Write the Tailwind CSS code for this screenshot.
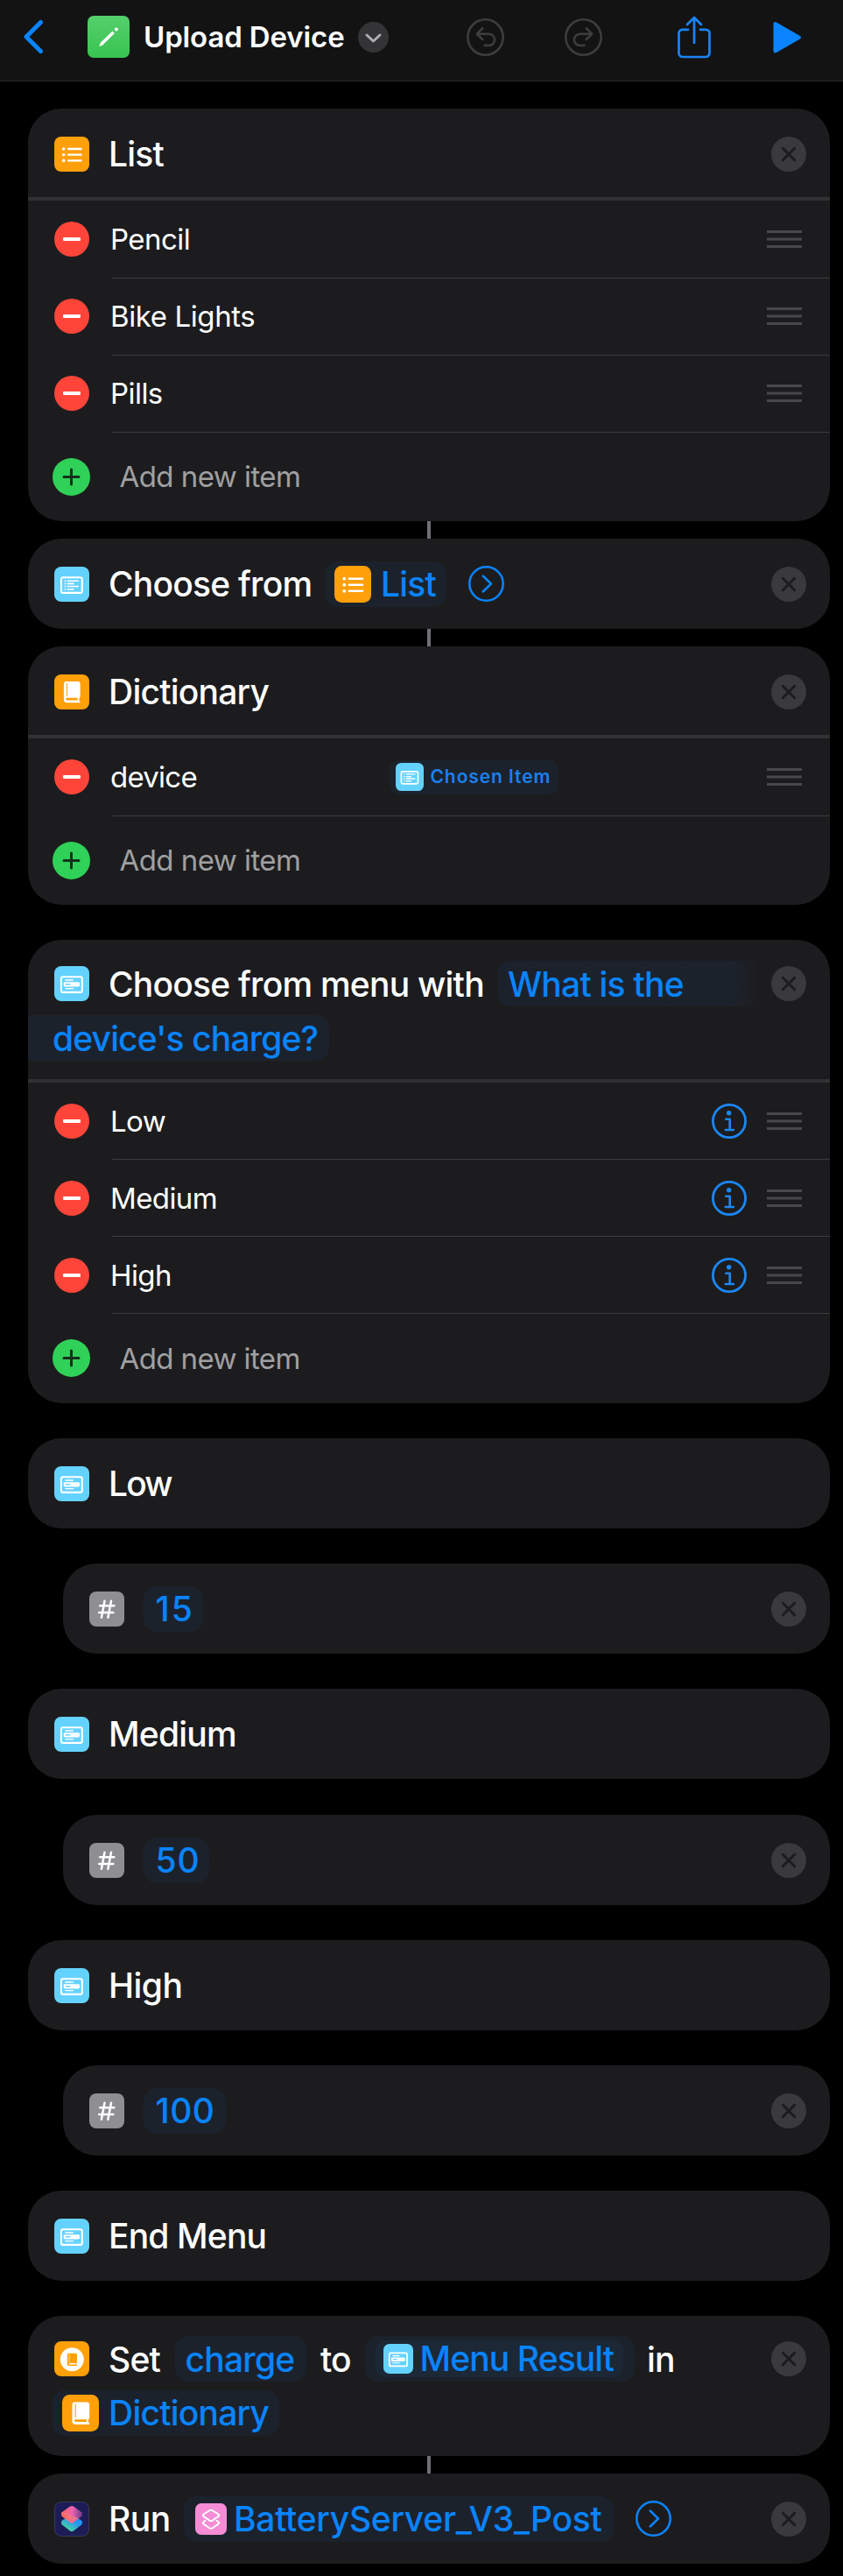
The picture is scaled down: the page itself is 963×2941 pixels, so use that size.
<!DOCTYPE html>
<html lang="en">
<head>
<meta charset="utf-8">
<title>Upload Device</title>
<script src="https://cdn.jsdelivr.net/npm/@tailwindcss/browser@4"></script>
</head>
<body class="bg-black text-white font-['Inter',sans-serif] w-[963px] h-[2941px] overflow-hidden">

<svg class="absolute w-0 h-0">
  <defs>
    <linearGradient id="sc-top" x1="0" y1="0.4" x2="1" y2="0.5"><stop offset="0" stop-color="#ff6a57"/><stop offset=".5" stop-color="#ee62b4"/><stop offset="1" stop-color="#6d3a86"/></linearGradient>
    <linearGradient id="sc-bot" x1="0.9" y1="0.2" x2="0.3" y2="1"><stop offset="0" stop-color="#1a86ff"/><stop offset=".45" stop-color="#2f9fe6"/><stop offset="1" stop-color="#4ade8e"/></linearGradient>
    <linearGradient id="sc-mid" x1="0" y1="0" x2="1" y2="0"><stop offset="0" stop-color="#ff6a57"/><stop offset="1" stop-color="#ef7f95"/></linearGradient>
  </defs>
  <symbol id="list" viewBox="0 0 40 40"><rect width="40" height="40" rx="8" fill="#ff9f0a"/><g fill="#fff"><circle cx="10.7" cy="14" r="1.8"/><circle cx="10.7" cy="20.7" r="1.8"/><circle cx="10.7" cy="27.4" r="1.8"/></g><path d="M16 14h14.6M16 20.7h14.6M16 27.4h14.6" stroke="#fff" stroke-width="2.3" stroke-linecap="round"/></symbol>
  <symbol id="choose" viewBox="0 0 40 40"><rect width="40" height="40" rx="8" fill="#64d2ff"/><rect x="8" y="12.3" width="23.8" height="17.6" rx="2" fill="none" stroke="#fff" stroke-width="2.1"/><path d="M11.6 16.2h1.7M14.7 16.2h13.3M11.6 19.4h1.7M14.7 19.4h7.8M11.6 22.5h1.7M14.7 22.5h13.3M11.6 25.7h1.7M14.7 25.7h7.8" stroke="#fff" stroke-width="1.6"/></symbol>
  <symbol id="menu" viewBox="0 0 40 40"><rect width="40" height="40" rx="8" fill="#64d2ff"/><rect x="8" y="12.3" width="23.8" height="17.6" rx="2" fill="none" stroke="#fff" stroke-width="2.1"/><rect x="10.7" y="18.2" width="18.3" height="5.2" rx="1.4" fill="#fff"/><path d="M12.8 20.8h5.6" stroke="#64d2ff" stroke-width="1.4"/><path d="M12.8 16h8.6M12.8 25.6h8.8" stroke="#fff" stroke-width="1.4" stroke-linecap="round"/></symbol>
  <symbol id="book" viewBox="0 0 40 40"><rect width="40" height="40" rx="8" fill="#ff9f0a"/><path d="M14 8h12.700a3 3 0 0 1 3 3v13.500a3 3 0 0 1-1.200 2.400v3.300l1.300 1v1.100H14.500a3.600 3.600 0 0 1-3.600-3.600V11A3 3 0 0 1 14 8z" fill="#fff"/><path d="M14.500 10v15" stroke="#ff9f0a" stroke-width="1"/><path d="M14.600 26.800h12v2.700h-12a1.350 1.350 0 0 1 0-2.700z" fill="#ff9f0a"/></symbol>
  <symbol id="setbook" viewBox="0 0 40 40"><rect width="40" height="40" rx="8" fill="#ff9f0a"/><circle cx="20.300" cy="20.700" r="13.500" fill="#fff"/><path d="M16.500 13.700h7.700a1.800 1.800 0 0 1 1.800 1.800v8a1.800 1.800 0 0 1-.7 1.400v2l.8.6v.6H16.900a2.100 2.100 0 0 1-2.100-2.100V15.500a1.800 1.800 0 0 1 1.700-1.800z" fill="#ff9f0a"/><path d="M17 15v9" stroke="#fff" stroke-width=".6"/><path d="M17 25h7.300v1.500H17z" fill="#fff"/></symbol>
  <symbol id="shortcuts" viewBox="0 0 40 40"><rect x=".5" y=".5" width="39" height="39" rx="7.500" fill="#1c1d57" stroke="#3a3a52"/><path d="M20 14.500l11.300 7.300q1.800 2.200 0 4.400L22 33.500q-2 1.500-4 0L8.700 26.200q-1.800-2.200 0-4.400z" fill="url(#sc-bot)"/><path d="M18 5.600q2-1.300 4 0l9.300 6.700q1.800 2.200 0 4.400L20 25 8.700 16.700q-1.800-2.200 0-4.400z" fill="url(#sc-top)"/><path d="M8.700 16.700q-1.800-2.200 0-4.400L20 15.500l8 3.800L20 25z" fill="url(#sc-mid)" opacity=".75"/></symbol>
  <symbol id="layers" viewBox="0 0 36 36"><rect width="36" height="36" rx="7" fill="#f58cd5"/><g fill="none" stroke="#fff" stroke-width="1.900" stroke-linejoin="round" stroke-linecap="round"><path d="M16.300 8.300q1.700-1.100 3.400 0l6.800 4.200q1.500 1.200 0 2.400l-6.800 4.700q-1.700 1.100-3.400 0L9.500 14.900q-1.500-1.200 0-2.400z"/><path d="M11.500 19.900l-2 1.300q-1.500 1.200 0 2.400l6.800 4.700q1.700 1.100 3.400 0l6.800-4.700q1.500-1.200 0-2.400l-2-1.300"/></g></symbol>
  <symbol id="hash" viewBox="0 0 40 40"><rect width="40" height="40" rx="8" fill="#8e8e93"/><path d="M17.500 10.800l-3.600 19M25 10.800l-3.600 19M12.200 16.300h16.200M11.200 23.900h16.200" stroke="#fff" stroke-width="2.500" stroke-linecap="round"/></symbol>
  <symbol id="x" viewBox="0 0 40 40"><circle cx="20" cy="20" r="20" fill="#3a3a3e"/><path d="M13.300 13.300l13.400 13.400M26.700 13.300L13.300 26.700" stroke="#1c1c1e" stroke-width="3" stroke-linecap="round"/></symbol>
  <symbol id="minus" viewBox="0 0 40 40"><circle cx="20" cy="20" r="20" fill="#ff453a"/><rect x="10" y="18" width="20" height="4" rx="1.200" fill="#fff"/></symbol>
  <symbol id="plus" viewBox="0 0 43 43"><circle cx="21.500" cy="21.500" r="21.500" fill="#30d158"/><path d="M13 21.500h17M21.500 13v17" stroke="#15301c" stroke-width="3" stroke-linecap="round"/></symbol>
  <symbol id="grip" viewBox="0 0 40 20"><path d="M0 1.500h40M0 10h40M0 18.500h40" stroke="#48484a" stroke-width="3"/></symbol>
  <symbol id="info" viewBox="0 0 40 40"><g fill="none" stroke="#1b87f5"><circle cx="20" cy="20" r="18.600" stroke-width="2.800"/><path d="M16.300 17.700h4.400v12M15.800 30h9" stroke-width="2.600" stroke-linecap="round" stroke-linejoin="round"/></g><circle cx="19.700" cy="10.800" r="2.700" fill="#1b87f5"/></symbol>
  <symbol id="go" viewBox="0 0 41 41"><g fill="none" stroke="#0a84ff" stroke-width="2.500"><circle cx="20.500" cy="20.500" r="19.200"/><path d="M16.700 11.500l9.300 9-9.300 9" stroke-linecap="round" stroke-linejoin="round"/></g></symbol>
</svg>

<!-- Navigation bar -->
<header class="flex items-center h-[93px] pb-[8px] bg-[#131313] border-b border-[#2b2b2b]">
  <svg class="ml-[26px] w-6 h-10 shrink-0" viewBox="0 0 24 40" fill="none" stroke="#0a84ff" stroke-width="5" stroke-linecap="round" stroke-linejoin="round"><path d="M20.500 3.500L4 20l16.500 16.500"/></svg>
  <div class="ml-[50px] w-12 h-12 shrink-0 rounded-[7px] bg-gradient-to-b from-[#55cf6b] to-[#37c450]">
    <svg class="w-12 h-12" viewBox="0 0 48 48"><path d="M13.300 35l1.500-4.200L28.400 17.400l2.500 2.500L17.300 33.400z" fill="#fff"/><circle cx="32.900" cy="15.500" r="2" fill="#fff"/></svg>
  </div>
  <span class="ml-4 w-[245px] shrink-0 whitespace-nowrap text-[33px] leading-10 font-semibold tracking-[-0.13px]">Upload Device</span>
  <svg class="w-[35px] h-[35px] shrink-0" viewBox="0 0 35 35"><circle cx="17.500" cy="17.500" r="17.500" fill="#343436"/><path d="M10 15l7.500 7 7.500-7" fill="none" stroke="#aeaeb2" stroke-width="3" stroke-linecap="round" stroke-linejoin="round"/></svg>
  <svg class="ml-[89px] w-[43px] h-[43px] shrink-0" viewBox="0 0 43 43" fill="none" stroke="#3d3d3f" stroke-width="2.600" stroke-linecap="round" stroke-linejoin="round"><circle cx="21.500" cy="21.500" r="20.200"/><path d="M18.300 11.300l-6.500 6.400 6.500 6.400M12 17.700h13.500a6.600 6.600 0 0 1 0 13.200h-5"/></svg>
  <svg class="ml-[69px] w-[43px] h-[43px] shrink-0" viewBox="0 0 43 43" fill="none" stroke="#3d3d3f" stroke-width="2.600" stroke-linecap="round" stroke-linejoin="round"><circle cx="21.500" cy="21.500" r="20.200"/><path d="M24.700 11.300l6.500 6.400-6.500 6.400M31 17.700H17.500a6.600 6.600 0 0 0 0 13.200h5"/></svg>
  <svg class="ml-[86px] w-[38px] h-[49px] shrink-0" viewBox="0 0 38 49" fill="none" stroke="#1a84f5" stroke-width="2.700" stroke-linecap="round" stroke-linejoin="round"><path d="M12 15.800H5.500a4 4 0 0 0-4 4v22.700a4.500 4.500 0 0 0 4.500 4.500h26a4.500 4.500 0 0 0 4.500-4.500V19.800a4 4 0 0 0-4-4H26M19 2v29M11 10l8-8 8 8"/></svg>
  <svg class="ml-[71px] w-[33px] h-[37px] shrink-0" viewBox="0 0 33 37"><path d="M2.500 3v31.500L30 18.700z" fill="#0a84ff" stroke="#0a84ff" stroke-width="4" stroke-linejoin="round"/></svg>
</header>

<main class="flex flex-col pt-[31px] pl-[32px] pr-[15px] text-[39px] font-medium tracking-[-0.77px] leading-[52px] whitespace-nowrap">

  <!-- List -->
  <section class="rounded-[38px] bg-[#1c1c1e] overflow-hidden">
    <div class="flex items-center h-[105px] pt-[2px] pl-[30px] pr-[27px] border-b-4 border-[#313133]">
      <svg class="w-10 h-10"><use href="#list"/></svg><span class="ml-[22px]">List</span><svg class="ml-auto w-10 h-10"><use href="#x"/></svg>
    </div>
    <div class="text-[33px] font-normal tracking-[-0.55px]">
      <div class="flex items-center h-[88px] pl-[30px]"><svg class="w-10 h-10"><use href="#minus"/></svg><span class="ml-[24px]">Pencil</span><svg class="ml-auto mr-8 w-10 h-5"><use href="#grip"/></svg></div>
      <div class="h-px ml-24 -mb-px bg-[#3c3c3f]"></div>
      <div class="flex items-center h-[88px] pl-[30px]"><svg class="w-10 h-10"><use href="#minus"/></svg><span class="ml-[24px] tracking-[-0.4px]">Bike Lights</span><svg class="ml-auto mr-8 w-10 h-5"><use href="#grip"/></svg></div>
      <div class="h-px ml-24 -mb-px bg-[#3c3c3f]"></div>
      <div class="flex items-center h-[88px] pl-[30px]"><svg class="w-10 h-10"><use href="#minus"/></svg><span class="ml-[24px]">Pills</span><svg class="ml-auto mr-8 w-10 h-5"><use href="#grip"/></svg></div>
      <div class="h-px ml-24 -mb-px bg-[#3c3c3f]"></div>
      <div class="flex items-center h-[102px] pl-[28px]"><svg class="w-[43px] h-[43px]"><use href="#plus"/></svg><span class="ml-[33.5px] text-[#a0a0a2]">Add new item</span></div>
    </div>
  </section>

  <div class="ml-[456px] w-1 h-5 bg-[#6f6f74]"></div>

  <!-- Choose from List -->
  <section class="flex items-center h-[103px] pl-[30px] pr-[27px] rounded-[38px] bg-[#1c1c1e]">
    <svg class="w-10 h-10"><use href="#choose"/></svg>
    <span class="ml-[22px] w-[247px]">Choose from</span>
    <div class="flex items-center w-[139px] h-[52px] pl-[11px] rounded-[15px] bg-[#1c222c] text-[#0a84ff]"><svg class="w-[42px] h-[42px]"><use href="#list"/></svg><span class="ml-[11px]">List</span></div>
    <svg class="ml-[25px] w-[41px] h-[41px]"><use href="#go"/></svg>
    <svg class="ml-auto w-10 h-10"><use href="#x"/></svg>
  </section>

  <div class="ml-[456px] w-1 h-5 bg-[#6f6f74]"></div>

  <!-- Dictionary -->
  <section class="rounded-[38px] bg-[#1c1c1e] overflow-hidden">
    <div class="flex items-center h-[105px] pt-[2px] pl-[30px] pr-[27px] border-b-4 border-[#313133]">
      <svg class="w-10 h-10"><use href="#book"/></svg><span class="ml-[22px]">Dictionary</span><svg class="ml-auto w-10 h-10"><use href="#x"/></svg>
    </div>
    <div class="text-[33px] font-normal tracking-[-0.55px]">
      <div class="flex items-center h-[88px] pl-[30px]">
        <svg class="w-10 h-10"><use href="#minus"/></svg><span class="ml-[24px] w-[319px] tracking-[-0.75px]">device</span>
        <div class="flex items-center w-[193px] h-[39px] pl-[7px] rounded-[10px] bg-[#1c222c]"><svg class="w-8 h-8"><use href="#choose"/></svg><span class="ml-[7.5px] text-[21px] leading-8 font-semibold tracking-[0.9px] text-[#1b80ee]">Chosen Item</span></div>
        <svg class="ml-auto mr-8 w-10 h-5"><use href="#grip"/></svg>
      </div>
      <div class="h-px ml-24 -mb-px bg-[#3c3c3f]"></div>
      <div class="flex items-center h-[102px] pl-[28px]"><svg class="w-[43px] h-[43px]"><use href="#plus"/></svg><span class="ml-[33.5px] text-[#a0a0a2]">Add new item</span></div>
    </div>
  </section>

  <!-- Choose from menu -->
  <section class="mt-10 rounded-[38px] bg-[#1c1c1e] overflow-hidden">
    <div class="flex flex-col gap-[10px] h-[163px] pt-6 border-b-4 border-[#313133]">
      <div class="flex items-center h-[52px] pl-[30px] pr-[27px]">
        <svg class="w-10 h-10"><use href="#menu"/></svg>
        <span class="ml-[22px] w-[444px] pt-[2px]">Choose from menu with</span>
        <div class="w-[298px] h-[52px] leading-[54px] pl-[12px] rounded-l-[15px] bg-gradient-to-r from-[#1c222c] from-90% to-[#1c1c1e] text-[#0a84ff]">What is the</div>
        <svg class="ml-auto w-10 h-10"><use href="#x"/></svg>
      </div>
      <div class="w-[344px] h-[52px] leading-[54px] pl-[28px] rounded-r-[15px] bg-[#1c222c] text-[#0a84ff] tracking-[-0.85px]">device's charge?</div>
    </div>
    <div class="text-[33px] font-normal tracking-[-0.6px]">
      <div class="flex items-center h-[88px] pl-[30px]"><svg class="w-10 h-10"><use href="#minus"/></svg><span class="ml-[24px]">Low</span><svg class="ml-auto mr-[23px] w-10 h-10"><use href="#info"/></svg><svg class="mr-8 w-10 h-5"><use href="#grip"/></svg></div>
      <div class="h-px ml-24 -mt-px bg-[#3c3c3f]"></div>
      <div class="flex items-center h-[88px] pl-[30px]"><svg class="w-10 h-10"><use href="#minus"/></svg><span class="ml-[24px]">Medium</span><svg class="ml-auto mr-[23px] w-10 h-10"><use href="#info"/></svg><svg class="mr-8 w-10 h-5"><use href="#grip"/></svg></div>
      <div class="h-px ml-24 -mt-px bg-[#3c3c3f]"></div>
      <div class="flex items-center h-[88px] pl-[30px]"><svg class="w-10 h-10"><use href="#minus"/></svg><span class="ml-[24px]">High</span><svg class="ml-auto mr-[23px] w-10 h-10"><use href="#info"/></svg><svg class="mr-8 w-10 h-5"><use href="#grip"/></svg></div>
      <div class="h-px ml-24 -mt-px bg-[#3c3c3f]"></div>
      <div class="flex items-center h-[102px] pb-px pl-[28px]"><svg class="w-[43px] h-[43px]"><use href="#plus"/></svg><span class="ml-[33.5px] text-[#a0a0a2]">Add new item</span></div>
    </div>
  </section>

  <!-- Menu branches -->
  <section class="mt-10 flex items-center h-[103px] pl-[30px] rounded-[38px] bg-[#1c1c1e]"><svg class="w-10 h-10"><use href="#menu"/></svg><span class="ml-[22px] tracking-[-1.8px]">Low</span></section>
  <section class="mt-10 ml-10 flex items-center h-[103px] pl-[30px] pr-[27px] rounded-[38px] bg-[#1c1c1e]">
    <svg class="w-10 h-10"><use href="#hash"/></svg><div class="ml-[22px] w-[68px] h-[52px] pl-[13.5px] rounded-[15px] bg-[#1c222c] text-[#0a84ff] tracking-[2px]">15</div><svg class="ml-auto w-10 h-10"><use href="#x"/></svg>
  </section>
  <section class="mt-10 flex items-center h-[103px] pl-[30px] rounded-[38px] bg-[#1c1c1e]"><svg class="w-10 h-10"><use href="#menu"/></svg><span class="ml-[22px]">Medium</span></section>
  <section class="mt-[41px] ml-10 flex items-center h-[103px] pl-[30px] pr-[27px] rounded-[38px] bg-[#1c1c1e]">
    <svg class="w-10 h-10"><use href="#hash"/></svg><div class="ml-[22px] w-[75px] h-[52px] pl-[13.5px] rounded-[15px] bg-[#1c222c] text-[#0a84ff] tracking-[1px]">50</div><svg class="ml-auto w-10 h-10"><use href="#x"/></svg>
  </section>
  <section class="mt-10 flex items-center h-[103px] pl-[30px] rounded-[38px] bg-[#1c1c1e]"><svg class="w-10 h-10"><use href="#menu"/></svg><span class="ml-[22px] tracking-[-0.5px]">High</span></section>
  <section class="mt-10 ml-10 flex items-center h-[103px] pl-[30px] pr-[27px] rounded-[38px] bg-[#1c1c1e]">
    <svg class="w-10 h-10"><use href="#hash"/></svg><div class="ml-[22px] w-[94px] h-[52px] pl-[13.5px] rounded-[15px] bg-[#1c222c] text-[#0a84ff] tracking-[0.5px]">100</div><svg class="ml-auto w-10 h-10"><use href="#x"/></svg>
  </section>
  <section class="mt-10 flex items-center h-[103px] pl-[30px] rounded-[38px] bg-[#1c1c1e]"><svg class="w-10 h-10"><use href="#menu"/></svg><span class="ml-[22px] tracking-[-0.85px]">End Menu</span></section>

  <!-- Set dictionary value -->
  <section class="mt-10 flex flex-col gap-[10px] h-[160px] pt-[23px] rounded-[38px] bg-[#1c1c1e]">
    <div class="flex items-center h-[52px] pl-[30px] pr-[27px]">
      <svg class="w-10 h-10"><use href="#setbook"/></svg>
      <span class="ml-[22px] w-[76px] pt-[2px]">Set</span>
      <div class="w-[150px] h-[52px] leading-[54px] pl-[11.5px] rounded-[15px] bg-[#1c222c] text-[#0a84ff] tracking-[-0.75px]">charge</div>
      <span class="ml-[16px] w-[51px] pt-[2px]">to</span>
      <div class="flex items-center w-[308px] h-[52px] pl-3 rounded-[15px] bg-[#1c222c]">
        <div class="flex items-center w-[283px] h-[42px] pl-[9px] rounded-[12px] bg-[#1c2836] text-[#0a84ff]"><svg class="w-[34px] h-[34px]"><use href="#menu"/></svg><span class="ml-[7.5px] tracking-[-0.9px]">Menu Result</span></div>
      </div>
      <span class="ml-[14px] pt-[2px]">in</span>
      <svg class="ml-auto w-10 h-10"><use href="#x"/></svg>
    </div>
    <div class="flex items-center ml-[27px] w-[260px] h-[52px] pl-3 rounded-[15px] bg-[#1c222c] text-[#0a84ff]"><svg class="w-[42px] h-[42px]"><use href="#book"/></svg><span class="ml-[11px]">Dictionary</span></div>
  </section>

  <div class="ml-[456px] w-1 h-5 bg-[#6f6f74]"></div>

  <!-- Run shortcut -->
  <section class="flex items-center h-[103px] pl-[30px] pr-[27px] rounded-[38px] bg-[#1c1c1e]">
    <svg class="w-10 h-10"><use href="#shortcuts"/></svg>
    <span class="ml-[22px] w-[86px] tracking-[-0.5px]">Run</span>
    <div class="flex items-center w-[491px] h-[52px] pl-[13px] rounded-[15px] bg-[#1c222c] text-[#0a84ff]"><svg class="w-9 h-9"><use href="#layers"/></svg><span class="ml-[8px] tracking-[-0.28px]">BatteryServer_V3_Post</span></div>
    <svg class="ml-[25px] w-[41px] h-[41px]"><use href="#go"/></svg>
    <svg class="ml-auto w-10 h-10"><use href="#x"/></svg>
  </section>
</main>
</body>
</html>
